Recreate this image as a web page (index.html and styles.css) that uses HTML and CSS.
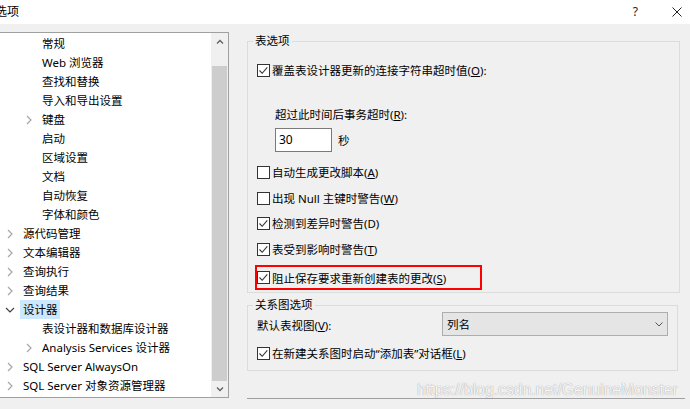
FILE: index.html
```html
<!DOCTYPE html>
<html lang="zh-CN">
<head>
<meta charset="utf-8">
<title>选项</title>
<link rel="stylesheet" href="styles.css">
</head>
<body>
<div class="titlebar">
  <span class="title">选项</span>
  <span class="help">?</span>
  <svg class="close" width="10" height="10" viewBox="0 0 10 10"><path d="M0.5 0.5L9.5 9.5M9.5 0.5L0.5 9.5" stroke="#222" stroke-width="1" fill="none"/></svg>
</div>
<div class="main">
  <div class="tree">
    <div class="list">
      <div class="row l1"><span class="exp"></span><span class="lbl">常规</span></div>
      <div class="row l1"><span class="exp"></span><span class="lbl">Web 浏览器</span></div>
      <div class="row l1"><span class="exp"></span><span class="lbl">查找和替换</span></div>
      <div class="row l1"><span class="exp"></span><span class="lbl">导入和导出设置</span></div>
      <div class="row l1"><span class="exp"><svg width="6" height="10" viewBox="0 0 6 10"><path d="M1 1L5 5L1 9" class="chev"/></svg></span><span class="lbl">键盘</span></div>
      <div class="row l1"><span class="exp"></span><span class="lbl">启动</span></div>
      <div class="row l1"><span class="exp"></span><span class="lbl">区域设置</span></div>
      <div class="row l1"><span class="exp"></span><span class="lbl">文档</span></div>
      <div class="row l1"><span class="exp"></span><span class="lbl">自动恢复</span></div>
      <div class="row l1"><span class="exp"></span><span class="lbl">字体和颜色</span></div>
      <div class="row l0"><span class="exp"><svg width="6" height="10" viewBox="0 0 6 10"><path d="M1 1L5 5L1 9" class="chev"/></svg></span><span class="lbl">源代码管理</span></div>
      <div class="row l0"><span class="exp"><svg width="6" height="10" viewBox="0 0 6 10"><path d="M1 1L5 5L1 9" class="chev"/></svg></span><span class="lbl">文本编辑器</span></div>
      <div class="row l0"><span class="exp"><svg width="6" height="10" viewBox="0 0 6 10"><path d="M1 1L5 5L1 9" class="chev"/></svg></span><span class="lbl">查询执行</span></div>
      <div class="row l0"><span class="exp"><svg width="6" height="10" viewBox="0 0 6 10"><path d="M1 1L5 5L1 9" class="chev"/></svg></span><span class="lbl">查询结果</span></div>
      <div class="row l0 sel"><span class="exp"><svg width="10" height="6" viewBox="0 0 10 6"><path d="M1 1L5 5L9 1" class="chev dark"/></svg></span><span class="lbl">设计器</span></div>
      <div class="row l1"><span class="exp"></span><span class="lbl">表设计器和数据库设计器</span></div>
      <div class="row l1"><span class="exp"><svg width="6" height="10" viewBox="0 0 6 10"><path d="M1 1L5 5L1 9" class="chev"/></svg></span><span class="lbl">Analysis Services 设计器</span></div>
      <div class="row l0"><span class="exp"><svg width="6" height="10" viewBox="0 0 6 10"><path d="M1 1L5 5L1 9" class="chev"/></svg></span><span class="lbl">SQL Server AlwaysOn</span></div>
      <div class="row l0"><span class="exp"><svg width="6" height="10" viewBox="0 0 6 10"><path d="M1 1L5 5L1 9" class="chev"/></svg></span><span class="lbl">SQL Server 对象资源管理器</span></div>
    </div>
    <div class="sb">
      <div class="sb-btn"><svg width="8" height="5" viewBox="0 0 8 5"><path d="M1 4.5L4 1.5L7 4.5" class="sbchev"/></svg></div>
      <div class="sb-gap"></div>
      <div class="thumb"></div>
      <div class="sb-btn down"><svg width="8" height="5" viewBox="0 0 8 5"><path d="M1 0.5L4 3.5L7 0.5" class="sbchev"/></svg></div>
    </div>
  </div>
  <div class="right">
    <fieldset class="grp grp-table">
      <legend>表选项</legend>
      <div class="cb-row first">
        <svg class="cb" viewBox="0 0 13 13"><rect x="0.5" y="0.5" width="12" height="12" fill="#fff" stroke="#333"/><path d="M2.5 6.5L5.2 9.3L10.3 3.3" fill="none" stroke="#333" stroke-width="1.1"/></svg>
        <span>覆盖表设计器更新的连接字符串超时值(<u>O</u>):</span>
      </div>
      <div class="timeout-label">超过此时间后事务超时(<u>R</u>):</div>
      <div class="timeout-row"><span class="num">30</span><span class="unit">秒</span></div>
      <div class="cb-row gap10">
        <svg class="cb" viewBox="0 0 13 13"><rect x="0.5" y="0.5" width="12" height="12" fill="#fff" stroke="#333"/></svg>
        <span>自动生成更改脚本(<u>A</u>)</span>
      </div>
      <div class="cb-row gap6">
        <svg class="cb" viewBox="0 0 13 13"><rect x="0.5" y="0.5" width="12" height="12" fill="#fff" stroke="#333"/></svg>
        <span>出现 Null 主键时警告(<u>W</u>)</span>
      </div>
      <div class="cb-row gap5">
        <svg class="cb" viewBox="0 0 13 13"><rect x="0.5" y="0.5" width="12" height="12" fill="#fff" stroke="#333"/><path d="M2.5 6.5L5.2 9.3L10.3 3.3" fill="none" stroke="#333" stroke-width="1.1"/></svg>
        <span>检测到差异时警告(D)</span>
      </div>
      <div class="cb-row gap6">
        <svg class="cb" viewBox="0 0 13 13"><rect x="0.5" y="0.5" width="12" height="12" fill="#fff" stroke="#333"/><path d="M2.5 6.5L5.2 9.3L10.3 3.3" fill="none" stroke="#333" stroke-width="1.1"/></svg>
        <span>表受到影响时警告(<u>T</u>)</span>
      </div>
      <div class="hl">
        <svg class="cb" viewBox="0 0 13 13"><rect x="0.5" y="0.5" width="12" height="12" fill="#fff" stroke="#333"/><path d="M2.5 6.5L5.2 9.3L10.3 3.3" fill="none" stroke="#333" stroke-width="1.1"/></svg>
        <span>阻止保存要求重新创建表的更改(<u>S</u>)</span>
      </div>
    </fieldset>
    <fieldset class="grp grp-diagram">
      <legend>关系图选项</legend>
      <div class="view-row">
        <span class="view-label">默认表视图(<u>V</u>):</span>
        <div class="select"><span>列名</span><svg width="8" height="5" viewBox="0 0 8 5"><path d="M0.5 0.5L4 4L7.5 0.5" fill="none" stroke="#555" stroke-width="1"/></svg></div>
      </div>
      <div class="cb-row gap7">
        <svg class="cb" viewBox="0 0 13 13"><rect x="0.5" y="0.5" width="12" height="12" fill="#fff" stroke="#333"/><path d="M2.5 6.5L5.2 9.3L10.3 3.3" fill="none" stroke="#333" stroke-width="1.1"/></svg>
        <span>在新建关系图时启动“添加表”对话框(<u>L</u>)</span>
      </div>
    </fieldset>
    <div class="rule"></div>
  </div>
</div>
<div class="watermark">https://blog.csdn.net/GenuineMonster</div>
</body>
</html>
```
FILE: styles.css
```css
* { box-sizing: border-box; }
html, body { margin: 0; padding: 0; }
body {
  width: 690px;
  height: 409px;
  overflow: hidden;
  position: relative;
  background: #f0f0f0;
  font-family: "Noto Sans", "Noto Sans CJK SC", sans-serif;
  font-size: 11.5px;
  color: #000;
}
u { text-decoration: underline; text-underline-offset: 1px; }

.titlebar {
  height: 24px;
  background: #fff;
  display: flex;
  align-items: center;
  padding-right: 8px;
}
.title { flex: 1; margin-left: -5px; font-size: 12px; line-height: 24px; }
.help { font-size: 12px; line-height: 24px; margin-right: 34px; color: #222; }
.close { display: block; }

.main {
  display: flex;
  gap: 18px;
  padding-top: 8px;
}

.tree {
  width: 230px;
  height: 366px;
  margin-left: -1px;
  border: 1px solid #a0a0a0;
  background: #fff;
  display: flex;
  flex: none;
}
.list { flex: 1; padding-top: 1px; overflow: hidden; }
.row {
  height: 19px;
  display: flex;
  align-items: center;
  white-space: nowrap;
  line-height: 19px;
}
.l1 { padding-left: 19px; }
.exp {
  width: 20px;
  height: 19px;
  display: flex;
  align-items: center;
  justify-content: center;
  flex: none;
}
.exp svg { display: block; }
.chev { fill: none; stroke: #a6a6a6; stroke-width: 1.2; }
.chev.dark { stroke: #404040; }
.lbl { padding: 0 2px 0 3px; height: 19px; }
.sel .lbl { background: #cce8ff; }

.sb {
  width: 17px;
  flex: none;
  display: flex;
  flex-direction: column;
  background: #f0f0f0;
}
.sb-btn {
  height: 17px;
  display: flex;
  align-items: center;
  justify-content: center;
}
.sb-btn.down { height: 16px; }
.sbchev { fill: none; stroke: #606060; stroke-width: 1.3; }
.sb-gap { height: 16px; }
.thumb { flex: 1; margin: 0 1px; background: #cdcdcd; }

.right {
  width: 438px;
  padding-top: 1px;
  display: flex;
  flex-direction: column;
}
.grp {
  margin: 0;
  border: 1px solid #dcdcdc;
  padding: 0 8px 2px 9px;
  min-width: 0;
}
.grp legend {
  padding: 0 2px;
  margin-left: -4px;
  line-height: 16px;
  font-size: 11.5px;
}
.grp-table { width: 433px; }
.grp-diagram { width: 431px; margin-top: 4px; padding: 0 9px 7px 9px; }

.cb-row {
  display: flex;
  align-items: center;
  height: 20px;
  white-space: nowrap;
}
.cb { width: 13px; height: 13px; flex: none; margin-right: 2px; display: block; }
.first { margin-top: 11px; }
.gap10 { margin-top: 10px; }
.gap7 { margin-top: 7px; }
.gap6 { margin-top: 6px; }
.gap5 { margin-top: 5px; }

.timeout-label { margin-top: 25px; height: 20px; line-height: 20px; padding-left: 18px; }
.timeout-row {
  margin-top: 3px;
  height: 24px;
  display: flex;
  align-items: center;
  padding-left: 18px;
}
.num {
  width: 57px;
  height: 24px;
  border: 1px solid #7a7a7a;
  background: #fff;
  padding-left: 3px;
  line-height: 22px;
  font-size: 12px;
}
.unit { margin-left: 6px; }

.hl {
  margin-top: 6px;
  margin-left: -2px;
  width: 227px;
  height: 25px;
  border: 2px solid #ff0000;
  display: flex;
  align-items: center;
  white-space: nowrap;
}

.view-row {
  display: flex;
  align-items: center;
  justify-content: space-between;
  height: 24px;
  margin-top: -1px;
}
.view-label { padding-top: 2px; }
.select {
  width: 226px;
  height: 24px;
  background: #e5e5e5;
  border: 1px solid #adadad;
  display: flex;
  align-items: center;
  justify-content: space-between;
  padding: 0 4px;
}
.select svg { display: block; }

.rule { margin-top: 27px; height: 1px; background: #a0a0a0; width: 438px; }

.watermark {
  position: absolute;
  left: 417px;
  top: 380px;
  font-family: "Liberation Sans", Arial, sans-serif;
  font-size: 15.7px;
  line-height: 20px;
  color: rgba(255, 255, 255, 0.92);
  text-shadow: 0 0 1px rgba(0, 0, 0, 0.45);
  white-space: nowrap;
}
```
